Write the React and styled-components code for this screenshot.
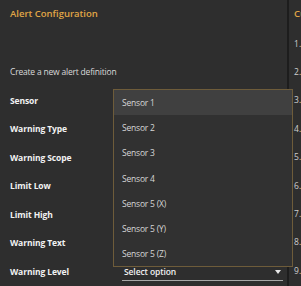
import React from "react";
import styled, { createGlobalStyle } from "styled-components";

const GlobalStyle = createGlobalStyle`
  html, body {
    margin: 0;
    padding: 0;
    background: #2e2e2e;
  }
  body {
    font-family: "Open Sans", "Noto Sans", sans-serif;
  }
`;

const Screen = styled.div`
  display: flex;
  width: 301px;
  height: 286px;
  overflow: hidden;
  background: #2e2e2e;
`;

const Panel = styled.section`
  position: relative;
  width: 289px;
  flex: none;
  padding: 0 4px 0 10px;
  box-sizing: border-box;
  border-right: 2px solid #1d1d1d;
`;

const Side = styled.section`
  flex: 1;
  padding-left: 5px;
  overflow: hidden;
  white-space: nowrap;
`;

const Title = styled.h2`
  margin: 0;
  height: 27px;
  display: flex;
  align-items: center;
  font-size: 9.5px;
  font-weight: 600;
  color: #e0a646;
`;

const Intro = styled.p`
  margin: 38px 0 7px;
  line-height: 14px;
  font-size: 8.5px;
  letter-spacing: -0.2px;
  color: #d9d9d9;
`;

const Row = styled.div`
  display: grid;
  grid-template-columns: 112px 1fr;
  align-items: center;
  height: 28.5px;
`;

const Label = styled.span`
  font-size: 8.5px;
  font-weight: 700;
  letter-spacing: -0.1px;
  color: #f2f2f2;
`;

const Select = styled.div`
  display: flex;
  align-items: center;
  justify-content: space-between;
  height: 16px;
  margin-top: 2px;
  padding: 0 2px;
  border-bottom: 1px solid #a8a8a8;
  font-size: 8.5px;
  font-weight: 600;
  letter-spacing: -0.1px;
  color: #f0f0f0;
`;

const Caret = styled.span`
  width: 0;
  height: 0;
  border-left: 3px solid transparent;
  border-right: 3px solid transparent;
  border-top: 4px solid #e8e8e8;
`;

const Menu = styled.ul`
  position: absolute;
  left: 113px;
  top: 89px;
  width: 180px;
  margin: 0;
  padding: 0;
  list-style: none;
  background: #313131;
  border: 1px solid #6e5c3a;
  box-sizing: border-box;
  z-index: 2;
`;

const Item = styled.li`
  height: 25.2px;
  display: flex;
  align-items: center;
  padding-left: 8px;
  font-size: 8.5px;
  letter-spacing: -0.2px;
  color: #d6d6d6;
  background: ${props => (props.active ? "#404040" : "transparent")};
`;

const SideList = styled.div`
  margin-top: 2px;
`;

const SideRow = styled.div`
  height: 28.4px;
  display: flex;
  align-items: center;
  font-size: 8.5px;
  color: #cfcfcf;
`;

const labels = [
  "Sensor",
  "Warning Type",
  "Warning Scope",
  "Limit Low",
  "Limit High",
  "Warning Text",
  "Warning Level"
];

const sensors = [
  "Sensor 1",
  "Sensor 2",
  "Sensor 3",
  "Sensor 4",
  "Sensor 5 (X)",
  "Sensor 5 (Y)",
  "Sensor 5 (Z)"
];

export default function App() {
  return (
    <Screen>
      <GlobalStyle />
      <Panel>
        <Title>Alert Configuration</Title>
        <Intro>Create a new alert definition</Intro>
        {labels.map((label, i) => (
          <Row key={label}>
            <Label>{label}</Label>
            {i === labels.length - 1 ? (
              <Select>
                <span>Select option</span>
                <Caret />
              </Select>
            ) : (
              <span />
            )}
          </Row>
        ))}
        <Menu>
          {sensors.map((s, i) => (
            <Item key={s} active={i === 0}>
              {s}
            </Item>
          ))}
        </Menu>
      </Panel>
      <Side>
        <Title>Current Alerts</Title>
        <SideList>
          {[1, 2, 3, 4, 5, 6, 7, 8, 9].map(n => (
            <SideRow key={n}>{n}. Alert</SideRow>
          ))}
        </SideList>
      </Side>
    </Screen>
  );
}
